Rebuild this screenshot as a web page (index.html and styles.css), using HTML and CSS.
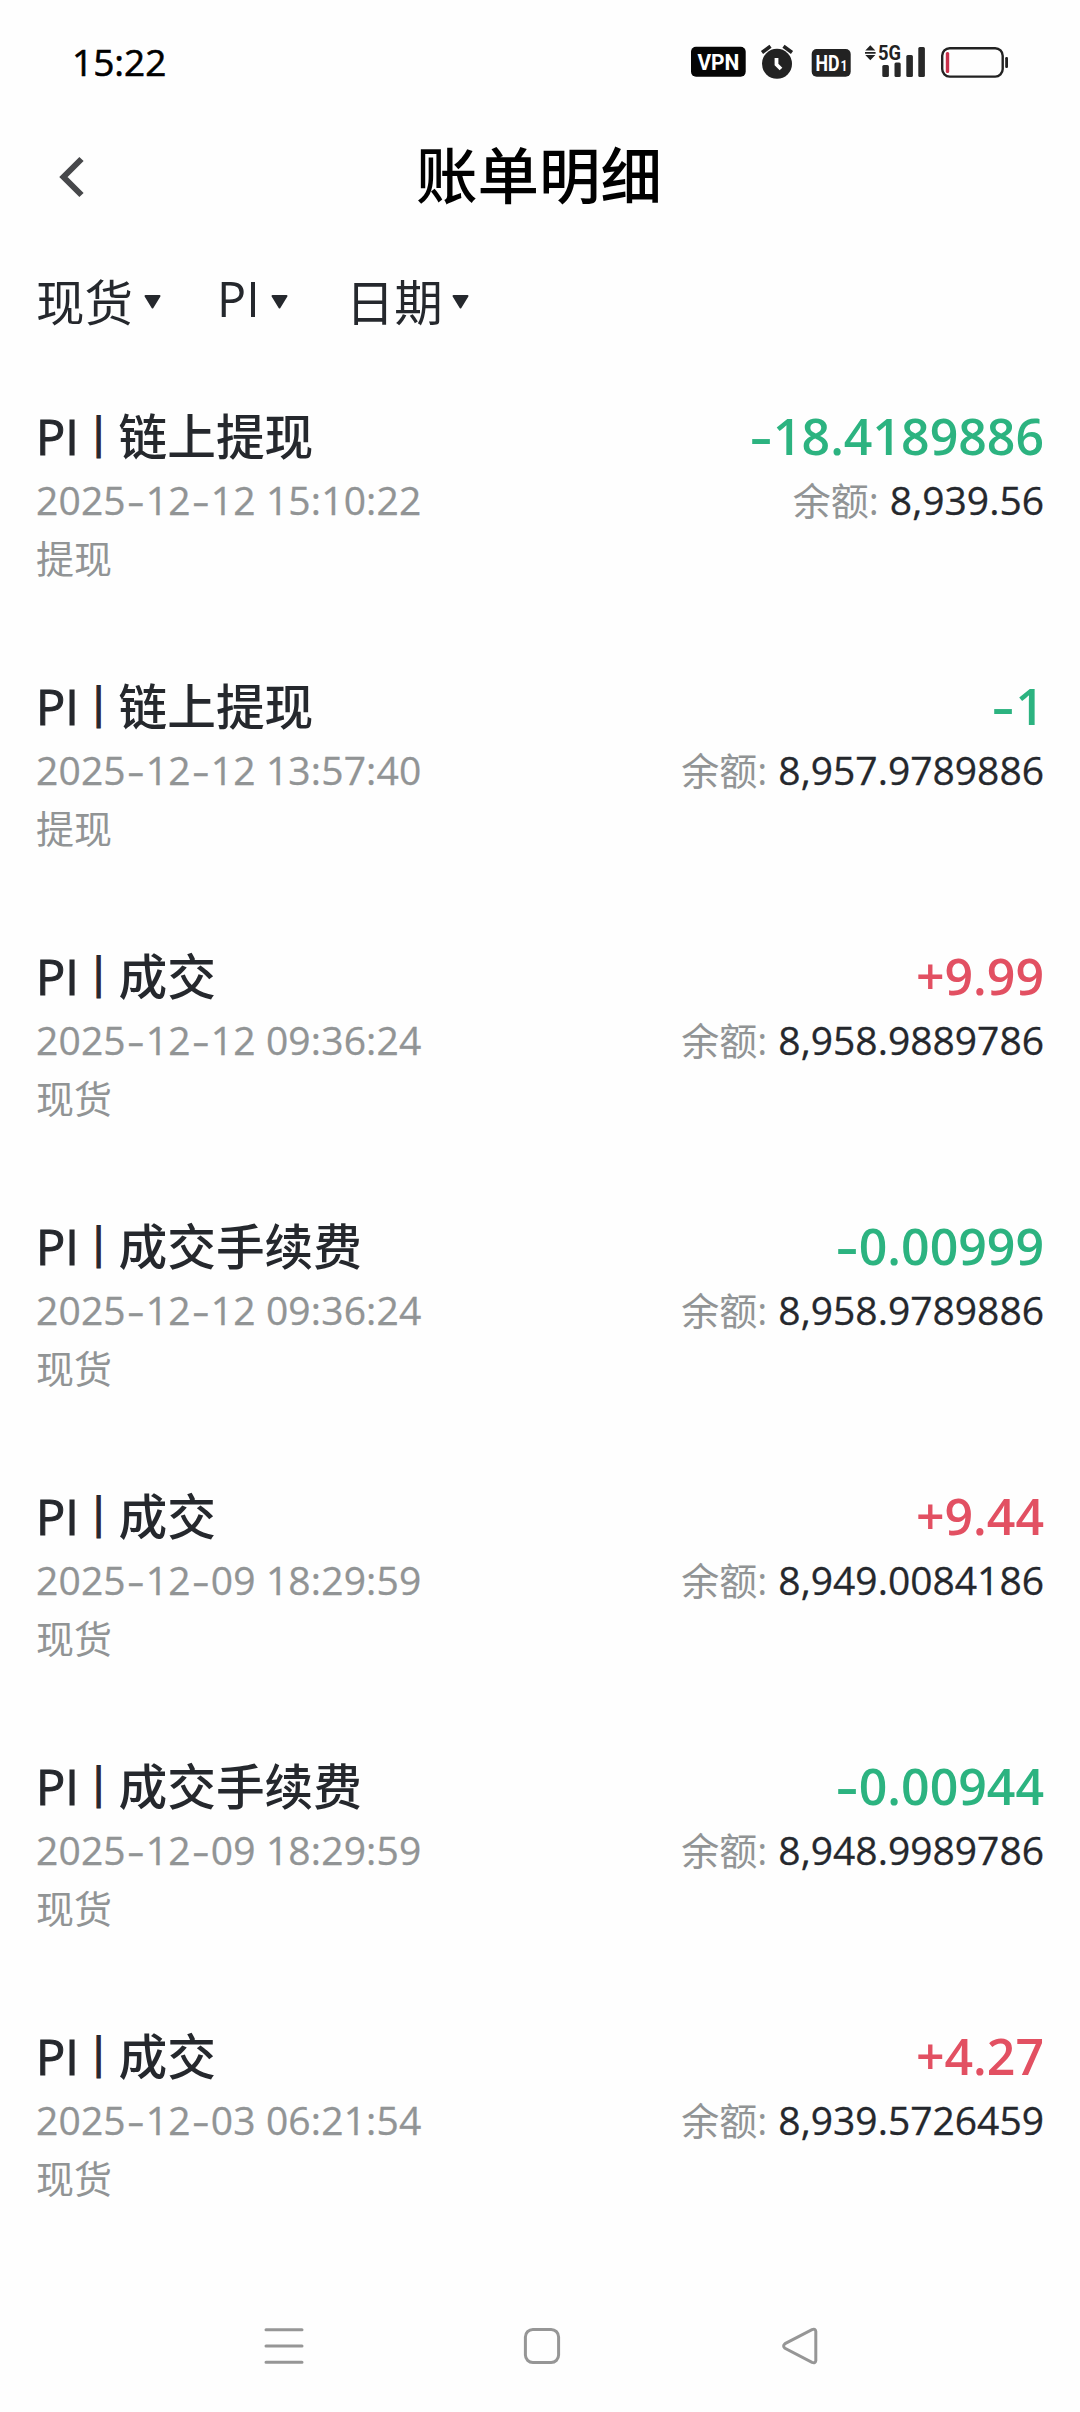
FILE: index.html
```html
<!DOCTYPE html>
<html lang="zh-CN">
<head>
<meta charset="utf-8">
<title>账单明细</title>
<link rel="stylesheet" href="styles.css">
</head>
<body>
<div class="screen">
  <div class="status">
    <span class="clock">15:22</span>
    <svg class="status-icons" width="320" height="40" viewBox="0 0 320 40">
      <rect x="1" y="6.7" width="54.7" height="30" rx="5" fill="#050505"/>
      <text x="28.4" y="30" class="badge-text" font-size="21.5" text-anchor="middle" textLength="42" lengthAdjust="spacingAndGlyphs">VPN</text>
      <circle cx="87" cy="23.8" r="15" fill="#222"/>
      <path d="M72 12.5l8.5-6.3M102 12.5l-8.5-6.3" stroke="#222" stroke-width="3.6"/>
      <path d="M86.5 18v6.5l4.5 4.5" fill="none" stroke="#fff" stroke-width="3.8"/>
      <rect x="121.7" y="9" width="39" height="27.7" rx="5" fill="#222"/>
      <text x="125.5" y="30.6" class="badge-text" font-size="21.5" textLength="24" lengthAdjust="spacingAndGlyphs">HD</text>
      <text x="150.5" y="31" class="badge-text" font-size="14" textLength="7" lengthAdjust="spacingAndGlyphs">1</text>
      <path d="M180.3 5.3l5 5.2h-10zM180.3 20.3l5-5.2h-10zM175 11.9h10.6v1.8H175z" fill="#222"/>
      <text x="188" y="20" class="net-text" font-size="19.5" textLength="23" lengthAdjust="spacingAndGlyphs">5G</text>
      <g fill="#282828">
        <rect x="192.3" y="25" width="6.6" height="12" rx="1.5"/>
        <rect x="204.5" y="22.5" width="6.2" height="14.5" rx="1.5"/>
        <rect x="216.3" y="15" width="6.6" height="22" rx="1.5"/>
        <rect x="228.3" y="7" width="6.6" height="30" rx="1.5"/>
      </g>
      <rect x="252.2" y="8.2" width="60.5" height="28.4" rx="7.5" fill="none" stroke="#222" stroke-width="2.4"/>
      <rect x="255.8" y="12" width="3.4" height="21" rx="1.5" fill="#c8304a"/>
      <rect x="315.2" y="17" width="2.8" height="11" rx="1.2" fill="#222"/>
    </svg>
  </div>

  <div class="header">
    <svg class="back" width="26" height="42" viewBox="0 0 26 42"><path d="M23.5 3L5.5 21l18 18" fill="none" stroke="#47484b" stroke-width="6"/></svg>
    <h1 class="page-title">账单明细</h1>
  </div>

  <div class="filters">
    <div class="filter filter-account"><span>现货</span><svg class="caret" width="17" height="14" viewBox="0 0 17 14"><path d="M1.5 1h14l-7 11.5z"/></svg></div>
    <div class="filter filter-coin"><span class="coin">PI</span><svg class="caret" width="17" height="14" viewBox="0 0 17 14"><path d="M1.5 1h14l-7 11.5z"/></svg></div>
    <div class="filter filter-date"><span>日期</span><svg class="caret" width="17" height="14" viewBox="0 0 17 14"><path d="M1.5 1h14l-7 11.5z"/></svg></div>
  </div>

  <div class="list">
    <div class="row">
      <div class="info"><div class="name"><b>PI <i>|</i></b> 链上提现</div><div class="time">2025<i>-</i>12<i>-</i>12 15:10:22</div><div class="kind">提现</div></div>
      <div class="sums"><div class="amount down"><i>-</i>18.4189886</div><div class="balance"><span>余额:</span> 8,939.56</div></div>
    </div>
    <div class="row">
      <div class="info"><div class="name"><b>PI <i>|</i></b> 链上提现</div><div class="time">2025<i>-</i>12<i>-</i>12 13:57:40</div><div class="kind">提现</div></div>
      <div class="sums"><div class="amount down"><i>-</i>1</div><div class="balance"><span>余额:</span> 8,957.9789886</div></div>
    </div>
    <div class="row">
      <div class="info"><div class="name"><b>PI <i>|</i></b> 成交</div><div class="time">2025<i>-</i>12<i>-</i>12 09:36:24</div><div class="kind">现货</div></div>
      <div class="sums"><div class="amount up">+9.99</div><div class="balance"><span>余额:</span> 8,958.9889786</div></div>
    </div>
    <div class="row">
      <div class="info"><div class="name"><b>PI <i>|</i></b> 成交手续费</div><div class="time">2025<i>-</i>12<i>-</i>12 09:36:24</div><div class="kind">现货</div></div>
      <div class="sums"><div class="amount down"><i>-</i>0.00999</div><div class="balance"><span>余额:</span> 8,958.9789886</div></div>
    </div>
    <div class="row">
      <div class="info"><div class="name"><b>PI <i>|</i></b> 成交</div><div class="time">2025<i>-</i>12<i>-</i>09 18:29:59</div><div class="kind">现货</div></div>
      <div class="sums"><div class="amount up">+9.44</div><div class="balance"><span>余额:</span> 8,949.0084186</div></div>
    </div>
    <div class="row">
      <div class="info"><div class="name"><b>PI <i>|</i></b> 成交手续费</div><div class="time">2025<i>-</i>12<i>-</i>09 18:29:59</div><div class="kind">现货</div></div>
      <div class="sums"><div class="amount down"><i>-</i>0.00944</div><div class="balance"><span>余额:</span> 8,948.9989786</div></div>
    </div>
    <div class="row">
      <div class="info"><div class="name"><b>PI <i>|</i></b> 成交</div><div class="time">2025<i>-</i>12<i>-</i>03 06:21:54</div><div class="kind">现货</div></div>
      <div class="sums"><div class="amount up">+4.27</div><div class="balance"><span>余额:</span> 8,939.5726459</div></div>
    </div>
  </div>

  <div class="nav">
    <svg width="40" height="40" viewBox="0 0 40 40"><path d="M2 3.7h36M2 20h36M2 36.3h36"/></svg>
    <svg width="40" height="40" viewBox="0 0 40 40"><rect x="3.4" y="3.4" width="33.2" height="33.2" rx="7.5"/></svg>
    <svg width="40" height="40" viewBox="0 0 40 40"><path d="M5 17.7L32 3.6q3.4-1.2 3.8 1.8v29.2q-.4 3-3.8 1.8L5 22.3q-2.8-2.3 0-4.6z"/></svg>
  </div>
</div>
</body>
</html>
```

FILE: styles.css
```css
* { box-sizing: border-box; margin: 0; padding: 0; }

body {
  background: #fefefe;
  color: #25282d;
  font-family: "Open Sans", "Noto Sans CJK SC", sans-serif;
}

i { font-style: normal; }

.screen {
  width: 1080px;
  height: 2412px;
  display: flex;
  flex-direction: column;
}

.status {
  height: 120px;
  padding: 40px 70px 0 72px;
  display: flex;
  justify-content: space-between;
  align-items: flex-start;
}

.clock {
  font-size: 37px;
  line-height: 44px;
  color: #000;
  -webkit-text-stroke: 0.6px #000;
}

.status-icons { display: block; }
.badge-text, .net-text { font-family: Roboto, sans-serif; font-weight: 700; }
.badge-text { fill: #fff; }
.net-text { fill: #222; }

.header {
  height: 112px;
  padding: 2px 60px 0 58px;
  display: grid;
  grid-template-columns: 26px 1fr 26px;
  align-items: center;
}

.page-title {
  font-size: 61.5px;
  line-height: 80px;
  height: 84px;
  font-weight: 500;
  color: #000;
  text-align: center;
}

.filters {
  height: 174px;
  padding: 36px 36px 0;
  display: flex;
  align-items: flex-start;
}

.filter {
  height: 68px;
  font-size: 48.5px;
  line-height: 68px;
  display: flex;
  align-items: center;
  gap: 11px;
}

.coin { padding-bottom: 8px; }
.filter-account { margin-right: 56px; }
.filter-coin { margin-right: 58px; }
.filter-date { gap: 9px; }
.caret {
  fill: #25282d;
  stroke: #25282d;
  stroke-width: 2;
  stroke-linejoin: round;
}

.list { height: 1890px; }

.row {
  height: 270px;
  padding: 0 36px;
  display: flex;
  justify-content: space-between;
}

.name {
  font-size: 48.7px;
  line-height: 60px;
  font-weight: 500;
  word-spacing: -6.2px;
}

.name b {
  font-weight: 400;
  -webkit-text-stroke: 1px currentColor;
}

.name i {
  display: inline-block;
  transform: translateY(-5px) scaleY(0.88);
}

.time {
  font-size: 39px;
  line-height: 68px;
  letter-spacing: 0.15px;
  color: #919495;
  -webkit-text-stroke: 0.3px currentColor;
}

.time i {
  display: inline-block;
  width: 20px;
  text-align: center;
  transform: scaleX(1.4);
}

.kind {
  font-size: 38px;
  line-height: 49px;
  color: #919495;
}

.sums { text-align: right; }

.amount {
  font-size: 50px;
  line-height: 60px;
  font-weight: 600;
}

.amount i {
  display: inline-block;
  width: 24px;
  text-align: center;
  transform: scaleX(1.4);
}

.down { color: #2cb380; }
.up { color: #e25062; }

.balance {
  font-size: 39px;
  line-height: 68px;
  -webkit-text-stroke: 0.3px currentColor;
}

.balance span {
  margin-right: 1px;
  font-size: 38px;
  color: #919495;
  -webkit-text-stroke: 0;
}

.nav {
  flex: 1;
  padding: 30px 260px 0 264px;
  display: flex;
  justify-content: space-between;
  align-items: flex-start;
}

.nav svg {
  fill: none;
  stroke: #969696;
  stroke-width: 3;
  stroke-linecap: round;
}
```
